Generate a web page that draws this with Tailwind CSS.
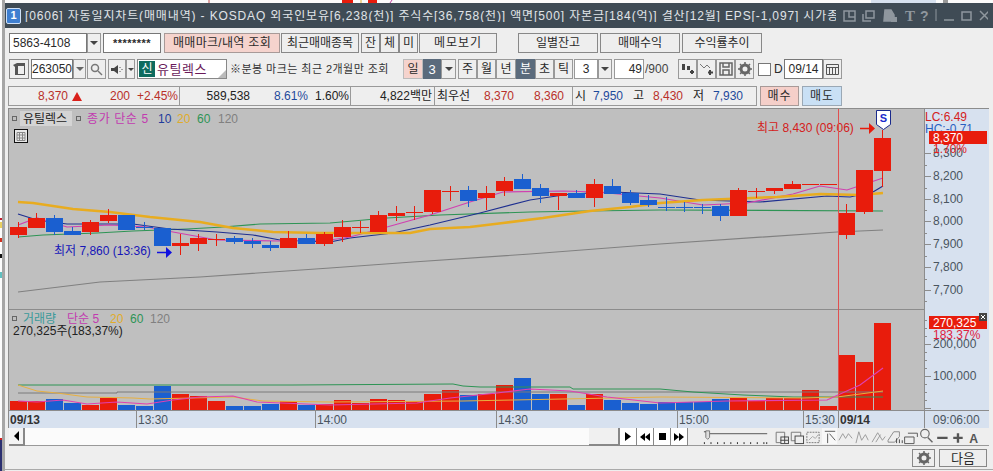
<!DOCTYPE html>
<html><head><meta charset="utf-8"><script src="https://cdn.jsdelivr.net/npm/@tailwindcss/browser@4"></script></head>
<body class="m-0 w-[993px] h-[471px] overflow-hidden bg-[#eeeeee] text-[12px] leading-none text-[#2a2a2a] font-['Liberation_Sans','Noto_Sans_CJK_KR',sans-serif]">
<svg width="5" height="471" viewBox="0 0 5 471" class="absolute left-0 top-0 block"><rect width="5" height="471" fill="#fdfdfd"/><rect x="2" width="3" height="471" fill="#a6a6a6"/><path d="M0 218h2v2H0z" fill="#c02030"/><path d="M0 222h2v6H0z" fill="#e8d060"/><path d="M0 238h2v4H0z" fill="#d03020"/><path d="M0 254h2v4H0z" fill="#111"/><path d="M0 272h2v6H0z" fill="#60c0c0"/><path d="M0 438h2v2H0z" fill="#d02020"/><path d="M0 440h2v31H0z" fill="#2a2f70"/></svg>
<svg width="988" height="3" viewBox="5 0 988 3" class="block ml-[5px]"><rect x="5" width="988" height="3" fill="#fbfbfb"/><path d="M209 0v3" stroke="#c05050"/><path d="M342 0h11v3h-11z" fill="#e81c0c"/><path d="M361 0v3" stroke="#e0b030"/><path d="M368 0h9v3h-9z" fill="#e81c0c"/><path d="M392 0l-2 3" stroke="#c040a0"/><path d="M871 0h65v3h-65z" fill="#d7e1ef"/><path d="M943 0h5v3h-5z" fill="#999"/></svg>
<div class="ml-[5px] h-[25px] bg-[#3f4b55] flex items-center text-[#e0e4e8] overflow-hidden">
  <div class="ml-[1px] w-[15px] h-[16px] rounded-[2px] border border-[#cfe0f5] bg-[#3f7fd0] text-white text-[11px] font-bold flex items-center justify-center shrink-0">1</div>
  <div class="ml-[4px] w-[811px] overflow-hidden whitespace-nowrap tracking-[0.86px] shrink-0">[0606] 자동일지차트(매매내역) - KOSDAQ 외국인보유[6,238(천)] 주식수[36,758(천)] 액면[500] 자본금[184(억)] 결산[12월] EPS[-1,097] 시가총액</div>
  <svg width="145" height="25" viewBox="843 3 145 25" class="ml-[7px] shrink-0" fill="none" stroke="#8f979e" stroke-width="1.5">
    <rect x="844" y="11" width="11" height="10"/><path d="M849 11v6h6"/>
    <rect x="866" y="11" width="8" height="7"/><path d="M863 14v7h8"/>
    <path d="M885 10h6l3 5v6h-10z" fill="#8f979e"/><rect x="891" y="17" width="6" height="5" fill="#8f979e" stroke="none"/>
    <text x="905" y="21" font-family="Liberation Serif" font-size="15" font-weight="700" fill="#8f979e" stroke="none">T</text>
    <text x="920" y="21" font-size="14" font-weight="700" fill="#8f979e" stroke="none">?</text>
    <path d="M936 9v12" stroke-width="1"/><path d="M944 20h10"/><rect x="962" y="12" width="9" height="8"/><path d="M980 11l9 9M989 11l-9 9"/>
  </svg>
</div>

<div class="flex h-[20px] mt-[5px] ml-[9px]">
  <div class="w-[78px] bg-white border border-[#777] pl-[3px] flex items-center">5863-4108</div>
  <div class="w-[14px] bg-[#efefef] border border-[#999] flex items-center justify-center"><div class="border-x-[4px] border-x-transparent border-t-[4px] border-t-[#444]"></div></div>
  <div class="ml-[2px] w-[58px] bg-white border border-[#777] flex items-center justify-center tracking-[0.5px] font-bold text-[11px]">********</div>
  <div class="ml-[3px] w-[116px] bg-[#f5d3cd] border border-[#a89a98] flex items-center justify-center tracking-[0.3px]">매매마크/내역 조회</div>
  <div class="ml-[1px] w-[78px] border border-[#888] flex items-center justify-center">최근매매종목</div>
  <div class="ml-[2px] w-[19px] border border-[#888] flex items-center justify-center">잔</div>
  <div class="w-[19px] border border-[#888] flex items-center justify-center">체</div>
  <div class="w-[19px] border border-[#888] flex items-center justify-center">미</div>
  <div class="ml-[1px] w-[78px] border border-[#888] flex items-center justify-center tracking-[1px]">메모보기</div>
  <div class="ml-[21px] w-[80px] border border-[#888] flex items-center justify-center">일별잔고</div>
  <div class="ml-[2px] w-[80px] border border-[#888] flex items-center justify-center">매매수익</div>
  <div class="ml-[2px] w-[80px] border border-[#888] flex items-center justify-center">수익률추이</div>
</div>

<div class="flex h-[20px] mt-[6px] ml-[9px]">
  <div class="w-[20px] border border-[#888] flex items-center justify-center"><svg width="14" height="14" viewBox="0 0 14 14"><path d="M1 3l4-2h8v12H3V5z" fill="#555"/><path d="M6 4h6v8H6z" fill="#eee"/></svg></div>
  <div class="ml-[2px] w-[42px] bg-white border border-[#777] flex items-center justify-center">263050</div>
  <div class="w-[13px] border border-[#999] flex items-center justify-center"><div class="border-x-[4px] border-x-transparent border-t-[4px] border-t-[#666]"></div></div>
  <div class="ml-[1px] w-[19px] border border-[#999] flex items-center justify-center"><svg width="13" height="13" viewBox="0 0 13 13" fill="none" stroke="#777" stroke-width="1.5"><circle cx="5" cy="5" r="3.5"/><path d="M8 8l4 4"/></svg></div>
  <div class="ml-[2px] w-[18px] border border-[#999] flex items-center justify-center"><svg width="13" height="11" viewBox="0 0 13 11"><path d="M0 4h3l4-3v9L3 7H0z" fill="#444"/><path d="M9 3v1M9 7v1M11 5v1" stroke="#555"/></svg></div>
  <div class="w-[9px] border border-[#999] flex items-center justify-center"><div class="border-x-[3px] border-x-transparent border-t-[3px] border-t-[#444]"></div></div>
  <div class="ml-[2px] w-[90px] bg-white border border-[#888] flex items-center relative">
    <div class="ml-[1px] w-[16px] h-[16px] bg-[#0e6b5e] text-white flex items-center justify-center text-[12px]">신</div>
    <span class="ml-[2px] text-[#6a1a5a] text-[13px] tracking-[0.5px]">유틸렉스</span>
    <div class="absolute right-0 bottom-0 w-0 h-0 border-l-[8px] border-l-transparent border-b-[8px] border-b-[#bbb]"></div>
  </div>
  <div class="ml-[3px] w-[173px] flex items-center whitespace-nowrap text-[11px] tracking-[0.45px] text-[#333]">※분봉 마크는 최근 2개월만 조회</div>
  <div class="w-[20px] bg-[#f5d3cd] border border-[#bbb] flex items-center justify-center">일</div>
  <div class="w-[18px] bg-[#5b6b7c] text-white flex items-center justify-center text-[13px]">3</div>
  <div class="w-[15px] border border-[#999] flex items-center justify-center"><div class="border-x-[4px] border-x-transparent border-t-[4px] border-t-[#444]"></div></div>
  <div class="ml-[2px] w-[19px] border border-[#999] flex items-center justify-center">주</div>
  <div class="w-[19px] border border-[#999] flex items-center justify-center">월</div>
  <div class="w-[20px] border border-[#999] flex items-center justify-center">년</div>
  <div class="w-[19px] bg-[#5b6b7c] text-white flex items-center justify-center">분</div>
  <div class="w-[19px] border border-[#999] flex items-center justify-center">초</div>
  <div class="w-[19px] border border-[#999] flex items-center justify-center">틱</div>
  <div class="ml-[1px] w-[24px] bg-white border border-[#999] flex items-center justify-center">3</div>
  <div class="w-[14px] border border-[#999] flex items-center justify-center"><div class="border-x-[4px] border-x-transparent border-t-[4px] border-t-[#444]"></div></div>
  <div class="ml-[2px] w-[30px] bg-white border border-[#999] flex items-center justify-end pr-[1px]">49</div>
  <div class="ml-[1px] w-[33px] flex items-center text-[#444]">/900</div>
  <div class="w-[19px] border border-[#999] flex items-center justify-center"><svg width="14" height="14" viewBox="0 0 14 14" fill="#444"><path d="M1 2h3v6H1zM6 4h3v4H6zM9 9h4v2H9zM10 8h2v4h-2z"/></svg></div>
  <div class="w-[19px] border border-[#999] flex items-center justify-center"><svg width="14" height="14" viewBox="0 0 14 14" fill="none" stroke="#777"><path d="M0 2l4 4 3-3 3 3"/><path d="M10 8v5M8 10.500h5" stroke="#444" stroke-width="2"/></svg></div>
  <div class="w-[19px] border border-[#999] flex items-center justify-center"><svg width="14" height="14" viewBox="0 0 14 14" fill="none" stroke="#666" stroke-width="1.500"><path d="M1 1h12v12H1zM4 1v4h6V1M4 13V8h6v5"/></svg></div>
  <div class="w-[19px] border border-[#999] flex items-center justify-center"><svg width="14" height="14" viewBox="0 0 14 14"><circle cx="7" cy="7" r="4" fill="none" stroke="#666" stroke-width="3"/><path d="M7 0v14M0 7h14M2 2l10 10M12 2L2 12" stroke="#666" stroke-width="1.500" stroke-dasharray="2 10"/></svg></div>
  <div class="ml-[4px] self-center w-[13px] h-[13px] bg-white border border-[#777]"></div>
  <div class="ml-[3px] w-[10px] flex items-center">D</div>
  <div class="w-[39px] bg-white border border-[#777] flex items-center justify-center">09/14</div>
  <div class="w-[19px] border border-[#999] flex items-center justify-center"><svg width="13" height="12" viewBox="0 0 13 12" fill="none" stroke="#555"><path d="M.5 1.500h12v10H.5zM.5 4.500h12M3.500 4.500v7M6.500 4.500v7M9.500 4.500v7"/></svg></div>
</div>

<div class="flex h-[20px] mt-[7px] ml-[8px]">
  <div class="w-[749px] border border-[#999] flex items-center text-[#b9302a] whitespace-nowrap">
    <span class="w-[59px] text-right">8,370</span>
    <span class="ml-[4px] w-0 h-0 border-x-[5px] border-x-transparent border-b-[9px] border-b-[#d9201a]"></span>
    <span class="w-[48px] text-right">200</span>
    <span class="w-[48px] text-right">+2.45%</span>
    <span class="w-[2px] h-full border-r border-[#999]"></span>
    <span class="w-[70px] text-right text-[#222]">589,538</span>
    <span class="w-[58px] text-right text-[#1e4a9c]">8.61%</span>
    <span class="w-[41px] text-right text-[#222]">1.60%</span>
    <span class="w-[2px] h-full border-r border-[#999]"></span>
    <span class="w-[81px] text-right text-[#222]">4,822백만</span>
    <span class="w-[3px] h-full border-r border-[#999]"></span>
    <span class="ml-[2px] w-[36px] text-[#222]">최우선</span>
    <span class="w-[41px] text-right">8,370</span>
    <span class="w-[50px] text-right">8,360</span>
    <span class="w-[9px] h-full border-r border-[#999]"></span>
    <span class="ml-[2px] w-[12px] text-[#222]">시</span>
    <span class="w-[36px] text-right text-[#1e4a9c]">7,950</span>
    <span class="ml-[10px] w-[12px] text-[#222]">고</span>
    <span class="w-[38px] text-right">8,430</span>
    <span class="ml-[10px] w-[12px] text-[#222]">저</span>
    <span class="w-[38px] text-right text-[#1e4a9c]">7,930</span>
  </div>
  <div class="ml-[3px] w-[39px] bg-[#f5cfc9] border border-[#a89a98] flex items-center justify-center tracking-[1px]">매수</div>
  <div class="ml-[3px] w-[40px] bg-[#c9e0f5] border border-[#9aa8b5] flex items-center justify-center tracking-[1px]">매도</div>
</div>

<svg width="985" height="320" viewBox="8 108 985 320" class="block mt-[2px] ml-[8px]" font-family="'Liberation Sans','Noto Sans CJK KR',sans-serif" font-size="12">
  <rect x="8" y="108" width="916" height="302" fill="#bfbfbf"/>
  <rect x="924" y="108" width="65" height="320" fill="#d7e1ef"/>
  <rect x="8" y="410" width="916" height="18" fill="#d7e1ef"/>
  <path d="M8 108.500H989M8.500 108V428M8 309.500H924M8 410.500H989M924.500 108V428M8 428.500H989" stroke="#8c8c8c" fill="none"/>
  <path d="M136.500 410v18M315.500 410v18M496.500 410v18M677.500 410v18M803.500 410v18M838.500 410v18" stroke="#8c8c8c"/>

  <!-- legend -->
  <rect x="12.500" y="116.500" width="4" height="4" fill="none" stroke="#666"/>
  <rect x="20" y="111" width="52" height="15" fill="#d4d4d4"/>
  <text x="23" y="123" fill="#222">유틸렉스</text>
  <rect x="76.500" y="116.500" width="4" height="4" fill="none" stroke="#666"/>
  <text x="87" y="123" fill="#c23bb0" letter-spacing="0.6">종가 단순 5</text><text x="158" y="123" fill="#1e3a9c">10</text><text x="177" y="123" fill="#e0ac2a">20</text><text x="197" y="123" fill="#2e9455">60</text><text x="218" y="123" fill="#808080">120</text>
  <rect x="14.500" y="129.500" width="13" height="13" fill="#e8e8e8" stroke="#111"/><path d="M17 132.500h8v8h-8zM17 135h8M17 138h8M19.500 132v8M22.500 132v8" fill="none" stroke="#888"/>

  <!-- MAs -->
  <polyline fill="none" stroke="#808080" stroke-width="1.200" points="18,292 100,282 200,277 330,268 413,262 530,254 660,244 837,232 883,230"/>
  <polyline fill="none" stroke="#2e9455" stroke-width="1.200" points="18,237 43,235 97,233 133,231 187,229 223,227 260,224 330,223 387,218 440,215 530,212 587,211 660,210 883,211"/>
  <polyline fill="none" stroke="#1e2f90" stroke-width="1.200" points="18,214 37,220 67,224 133,224 170,229 217,232 253,235 280,240 330,242 350,238 393,233 430,225 480,213 530,200 570,194 613,192 660,194 700,200 760,202 827,196 850,197 873,192 883,186"/>
  <polyline fill="none" stroke="#d040b0" stroke-width="1.200" points="18,225 37,218 67,227 110,225 147,227 173,232 217,240 280,241 330,240 350,237 387,227 430,215 470,202 503,192 563,191 597,192 660,198 703,205 747,203 793,194 820,186 847,190 883,178"/>
  <polyline fill="none" stroke="#e8ac20" stroke-width="2.500" points="18,202 33,203 73,209 110,212 150,217 200,222 233,228 273,232 320,233 350,233 410,233 430,229 470,227 503,223 543,218 590,211 630,207 660,203 703,200 777,197 820,194 860,195 883,193"/>

  <!-- candles -->
  <path stroke="#e81c0c" fill="none" d="M18.500 222V238M36.500 213V228M90.500 220V235M108.500 209V223M180.500 234V255M198.500 234V251M216.500 234V246M208 239.500H225M288.500 231V248M324.500 232V246M342.500 220V242M360.500 221V233M352 227.500H369M378.500 211V232M396.500 206V221M414.500 206V220M406 212.500H423M432.500 190V214M450.500 186V201M442 191.500H459M486.500 186V210M504.500 177V196M558.500 193V210M594.500 179V207M738.500 188V216M756.500 188V198M748 191.500H765M774.500 188V194M792.500 181V189M802 184.500H819M820 184.500H837M846.500 204V239M864.500 170V214M882.500 130V187"/>
  <path stroke="#1a5fd0" fill="none" d="M54.500 215V235M72.500 227V235M144.500 222V230M136 227.500H153M234.500 236V244M252.500 238V248M270.500 241V251M306.500 234V244M468.500 186V207M522.500 174V189M540.500 184V203M576.500 190V198M612.500 179V194M630.500 190V205M648.500 195V207M666.500 197V211M658 207.500H675M684.500 202V212M676 207.500H693M702.500 204V214M694 207.500H711M720.500 204V221"/>
  <path fill="#e81c0c" d="M10 227h17v8H10zM28 218h17v10H28zM82 222h17v10H82zM100 215h17v6h-17zM172 243h17v3h-17zM190 238h17v6h-17zM280 238h17v10h-17zM316 234h17v10h-17zM334 227h17v10h-17zM370 215h17v17h-17zM388 213h17v3h-17zM424 190h17v22h-17zM478 193h17v5h-17zM496 181h17v10h-17zM550 193h17v3h-17zM586 184h17v14h-17zM730 190h17v26h-17zM766 188h17v3h-17zM784 184h17v5h-17zM838 213h17v22h-17zM856 170h17v42h-17zM874 138h17v33h-17z"/>
  <path fill="#1a5fd0" d="M46 218h17v14H46zM64 231h17v4H64zM118 215h17v15h-17zM154 228h17v18h-17zM226 238h17v4h-17zM244 241h17v3h-17zM262 245h17v3h-17zM298 238h17v6h-17zM460 190h17v11h-17zM514 179h17v10h-17zM532 188h17v8h-17zM568 193h17v5h-17zM604 186h17v8h-17zM622 193h17v10h-17zM640 200h17v5h-17zM712 206h17v10h-17z"/>

  <!-- annotations -->
  <text x="54" y="255" fill="#1616b8">최저 7,860 (13:36)</text>
  <path d="M157 252.500h10" stroke="#1010e0" stroke-width="1.500"/><path d="M166 247l6 5.500-6 5.500z" fill="#1010e0"/>
  <text x="757" y="132" fill="#d42020">최고 8,430 (09:06)</text>
  <path d="M860 128.500h10" stroke="#e81c0c" stroke-width="1.500"/><path d="M869 123l6 5.500-6 5.500z" fill="#e81c0c"/>
  <path d="M876.500 110.500h14v14l-7 5-7-5z" fill="#fff" stroke="#1a2a8c"/>
  <text x="883.500" y="122" fill="#1a2acc" font-size="11" font-weight="700" text-anchor="middle">S</text>

  <!-- volume -->
  <rect x="12.500" y="316.500" width="4" height="4" fill="none" stroke="#666"/>
  <text x="23" y="323" fill="#3a9a9a">거래량</text><text x="67" y="323" fill="#c23bb0">단순 5</text><text x="110" y="323" fill="#e0ac2a">20</text><text x="130" y="323" fill="#2e9455">60</text><text x="150" y="323" fill="#808080">120</text>
  <text x="13" y="335" fill="#222">270,325주(183,37%)</text>
  <path fill="#e81c0c" d="M10 401h17v9H10zM28 401h17v9H28zM82 405h17v5H82zM100 398h17v12h-17zM172 394h17v16h-17zM190 396h17v14h-17zM208 401h17v9h-17zM280 401h17v9h-17zM316 404h17v6h-17zM334 400h17v10h-17zM352 403h17v7h-17zM370 399h17v11h-17zM388 400h17v10h-17zM406 401h17v9h-17zM424 394h17v16h-17zM442 390h17v20h-17zM478 394h17v16h-17zM496 385h17v25h-17zM550 394h17v16h-17zM586 394h17v16h-17zM730 398h17v12h-17zM748 401h17v9h-17zM766 398h17v12h-17zM784 398h17v12h-17zM802 390h17v20h-17zM820 406h17v4h-17zM838 355h17v55h-17zM856 362h17v48h-17zM874 323h17v87h-17z"/>
  <path fill="#1a5fd0" d="M46 399h17v11H46zM64 403h17v7H64zM118 405h17v5h-17zM136 406h17v4h-17zM154 386h17v24h-17zM226 406h17v4h-17zM244 406h17v4h-17zM262 404h17v6h-17zM298 405h17v5h-17zM460 395h17v15h-17zM514 378h17v32h-17zM532 394h17v16h-17zM568 405h17v5h-17zM604 400h17v10h-17zM622 403h17v7h-17zM640 404h17v6h-17zM658 402h17v8h-17zM676 402h17v8h-17zM694 402h17v8h-17zM712 399h17v11h-17z"/>
  <polyline fill="none" stroke="#7a7a7a" points="18,393 117,393 117,392 883,392"/>
  <polyline fill="none" stroke="#2e9455" points="18,385 293,385 453,384 463,386 480,387 570,387 573,389 660,389 693,392 743,395 793,397 883,397"/>
  <polyline fill="none" stroke="#e8b040" points="18,385 37,391 57,393 87,397 133,398 150,399 233,397 263,401 330,402 463,401 563,399 660,397 803,398 837,397 883,391"/>
  <polyline fill="none" stroke="#e040b0" stroke-width="1.200" points="18,401 37,402 63,400 87,404 117,402 147,404 173,400 200,397 233,396 257,402 330,405 417,403 450,398 497,393 530,389 570,391 607,397 660,403 727,401 827,400 860,385 883,368"/>

  <path d="M838.500 109V410" stroke="#e05050"/>

  <!-- right axis -->
  <path stroke="#8c8c8c" d="M924 153.500h7M924 176.500h7M924 199.500h7M924 221.500h7M924 244.500h7M924 267.500h7M924 290.500h7M924 165.500h3M924 188.500h3M924 210.500h3M924 233.500h3M924 256.500h3M924 279.500h3M924 301.500h3M924 344.500h7M924 376.500h7M924 408.500h7M924 320.500h3M924 328.500h3M924 336.500h3M924 352.500h3M924 360.500h3M924 368.500h3M924 384.500h3M924 392.500h3M924 400.500h3"/>
  <g fill="#4a5560">
    <text x="933" y="157">8,300</text><text x="933" y="180">8,200</text><text x="933" y="203">8,100</text><text x="933" y="225">8,000</text><text x="933" y="248">7,900</text><text x="933" y="271">7,800</text><text x="933" y="294">7,700</text>
    <text x="933" y="348">200,000</text><text x="933" y="380">100,000</text>
  </g>
  <text x="925" y="121" fill="#d42020">LC:6.49</text>
  <text x="925" y="133" fill="#2a60c0">HC:-0.71</text>
  <rect x="929" y="131" width="58" height="13" fill="#e81c0c"/>
  <text x="933" y="142" fill="#fff">8,370</text>
  <text x="933" y="153" fill="#e02020">1.70%</text>
  <rect x="929" y="316" width="58" height="13" fill="#e81c0c"/>
  <text x="933" y="327" fill="#fff">270,325</text>
  <text x="933" y="339" fill="#e02040">183.37%</text>
  <rect x="979" y="313" width="8" height="8" fill="#444"/><path d="M981 315l4 4M985 315l-4 4" stroke="#fff"/>

  <!-- x axis -->
  <text x="10" y="424" font-weight="700" fill="#333">09/13</text>
  <g fill="#4a5560"><text x="138" y="424">13:30</text><text x="317" y="424">14:00</text><text x="498" y="424">14:30</text><text x="679" y="424">15:00</text><text x="805" y="424">15:30</text><text x="933" y="424">09:06:00</text></g>
  <text x="840" y="424" font-weight="700" fill="#333">09/14</text>
</svg>

<div class="flex h-[18px] ml-[9px] w-[980px] items-stretch">
  <div class="w-[16px] border-r-2 border-b-2 border-[#888] flex items-center justify-center bg-[#f4f4f4]"><div class="border-y-[5px] border-y-transparent border-r-[5px] border-r-black"></div></div>
  <div class="w-[564px] bg-[#fbfbfb] border-b border-[#999]"></div>
  <div class="w-[31px] bg-[#f0f0f0] border-r-2 border-b-2 border-[#888]"></div>
  <div class="w-[17px] border-r border-b border-[#888] flex items-center justify-center bg-white"><svg width="6" height="9" viewBox="0 0 6 9"><path d="M0 0l6 4.500L0 9z"/></svg></div>
  <div class="w-[17px] border-r border-b border-[#888] flex items-center justify-center bg-white"><svg width="10" height="8" viewBox="0 0 10 8"><path d="M5 0L0 4l5 4zM10 0L5 4l5 4z"/></svg></div>
  <div class="w-[17px] border-r border-b border-[#888] flex items-center justify-center bg-white"><div class="w-[7px] h-[7px] bg-black"></div></div>
  <div class="w-[17px] border-r border-b border-[#888] flex items-center justify-center bg-white"><svg width="10" height="8" viewBox="0 0 10 8"><path d="M0 0l5 4-5 4zM5 0l5 4-5 4z"/></svg></div>
  <svg width="301" height="18" viewBox="688 428 301 18" fill="none" stroke="#777" class="border-b border-[#999]">
    <path d="M700 434H763" stroke="#777" stroke-width="1.500"/><path d="M698 431h4v7l-2 2-2-2z" fill="#ddd"/><path d="M696 432h2" stroke="#444"/>
    <path d="M696.500 443v2M703.500 443v2M710.500 443v2M717.500 443v2M724.500 443v2M731.500 443v2M738.500 443v2M745.500 443v2M752.500 443v2M759.500 443v2M762.500 443v2" stroke="#222"/>
    <path d="M772.500 432.500h9v11h-9z"/><rect x="777.500" y="437.500" width="8" height="7" fill="#eee" stroke="#444"/><path d="M781.500 437v7M777 441h8" stroke="#444"/>
    <path d="M788.500 432.500h10v9h-10z"/><rect x="792.500" y="436.500" width="9" height="8" fill="#eee" stroke="#444"/>
    <path d="M805 432.500h13v11h-13z" stroke-dasharray="2 1"/><path d="M807 441l4-4 3 2 3-4" stroke="#aaa"/>
    <rect x="821" y="428" width="16" height="17" fill="#f8f8f8" stroke="none"/>
    <path d="M824 431.500h11M827 444v-10M829 434l6 7" stroke="#555"/>
    <path d="M839 441l4-7 3 5 3-5 4 5" stroke="#999"/>
    <path d="M857 444l3-12 3 9 4-6 3 6" stroke="#999"/>
    <path d="M874 443l6-10 5 8 3-4M878 443l5-8" stroke="#999"/>
    <path d="M891 441l6-9h6v5l-5 6h-7z" stroke="#888"/><path d="M900 439v5M903 440v4M906 441v3" stroke="#444"/>
    <path d="M908.500 437.500h10v7h-10zM912 433.500h10v4" stroke="#555"/>
    <circle cx="930" cy="434" r="4.500" stroke="#666" stroke-width="1.200"/><path d="M933 438l5 5" stroke="#666" stroke-width="1.500"/>
    <path d="M943 438.500h11M960 438.500h10M965 433.500v10" stroke="#555" stroke-width="2.500"/>
    <text x="977" y="444" font-size="13" font-weight="700" fill="#555" stroke="none" font-family="Liberation Sans">A</text>
  </svg>
</div>

<div class="flex justify-end h-[18px] mt-[3px] w-[987px]">
  <div class="w-[23px] border border-[#888] flex items-center justify-center"><svg width="14" height="14" viewBox="0 0 14 14"><circle cx="7" cy="7" r="4" fill="none" stroke="#666" stroke-width="3"/><path d="M7 0v14M0 7h14M2 2l10 10M12 2L2 12" stroke="#666" stroke-width="1.500" stroke-dasharray="2 10"/></svg></div>
  <div class="ml-[4px] w-[48px] border border-[#888] flex items-center justify-center text-[13px]">다음</div>
</div>
<div class="mt-[2px] ml-[5px] border-t border-[#aaa]"></div>
</body></html>
